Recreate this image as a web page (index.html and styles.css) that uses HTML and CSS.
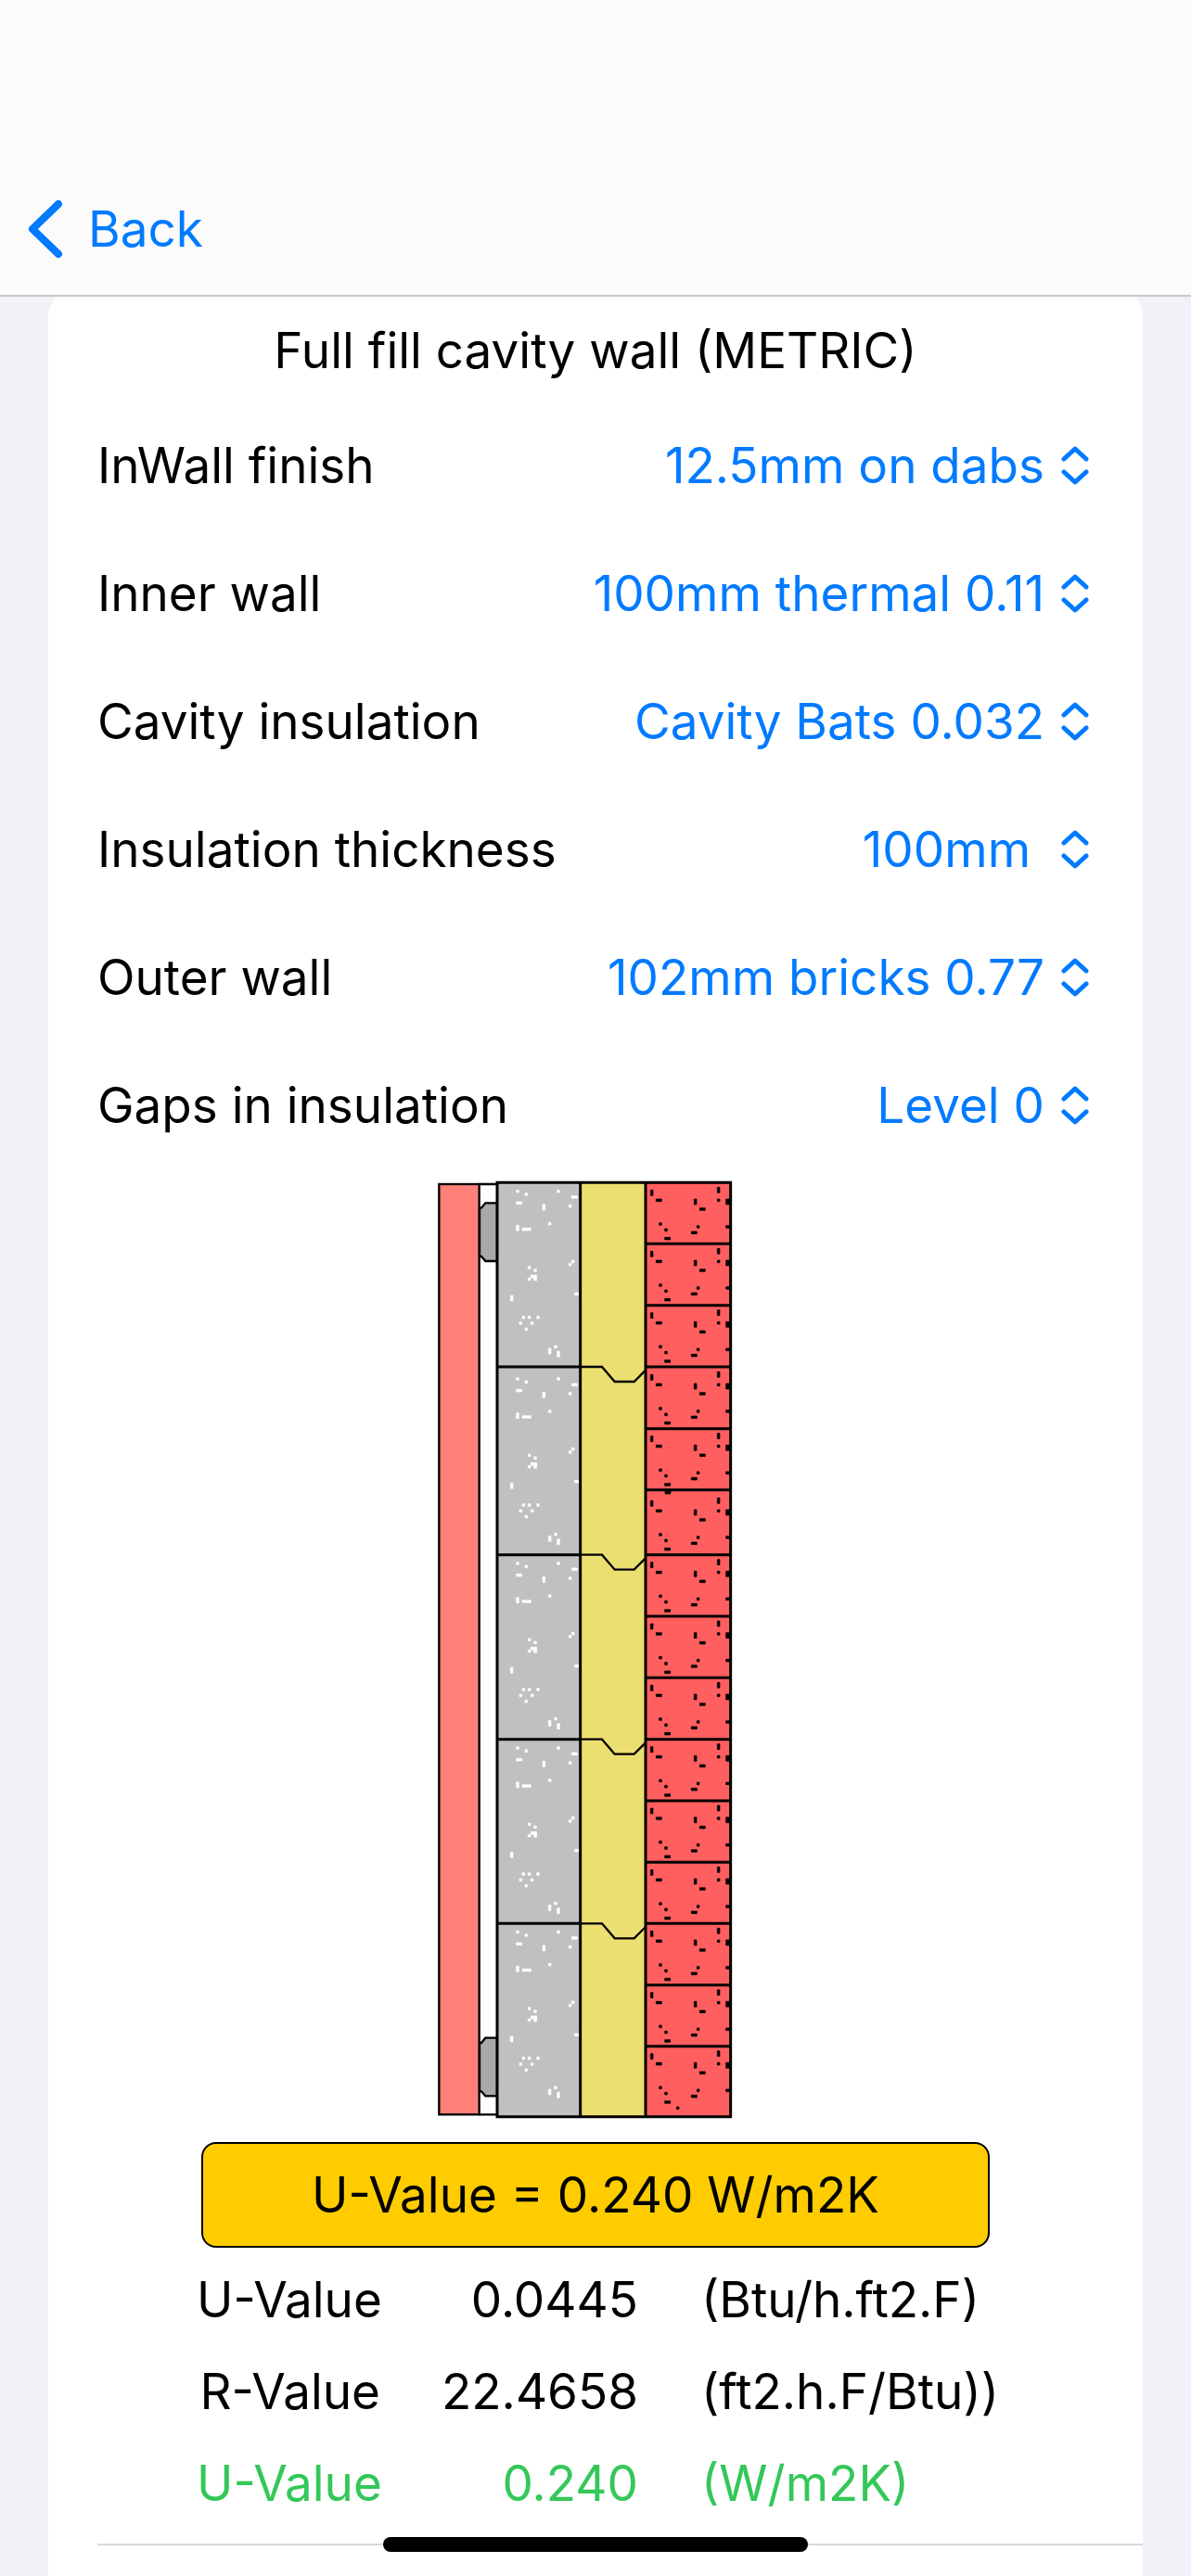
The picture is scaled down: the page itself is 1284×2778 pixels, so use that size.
FILE: index.html
```
<!DOCTYPE html>
<html lang="en">
<head>
    <meta charset="UTF-8">
    <meta name="viewport" content="width=device-width, initial-scale=1.0">
    <title>Full fill cavity wall</title>
    <link rel="stylesheet" href="styles.css">
</head>
<body>
    <header class="navbar">
        <a class="back" href="#">
            <svg class="back-icon" viewBox="0 0 38 64" aria-hidden="true">
                <path d="M33 5 L5 32 L33 59"/>
            </svg>
            Back
        </a>
    </header>

    <!-- shared shapes -->
    <svg class="defs" aria-hidden="true">
        <symbol id="updown" viewBox="0 0 30 42">
            <path d="M3 14 L15 3 L27 14 M3 28 L15 39 L27 28"/>
        </symbol>
    </svg>

    <main class="card">
        <h1 class="title">Full fill cavity wall (METRIC)</h1>

        <form class="options">
            <div class="row">
                <label for="finish">InWall finish</label>
                <select id="finish"><option>12.5mm on dabs</option></select>
                <svg class="updown"><use href="#updown"/></svg>
            </div>
            <div class="row">
                <label for="inner">Inner wall</label>
                <select id="inner"><option>100mm thermal 0.11</option></select>
                <svg class="updown"><use href="#updown"/></svg>
            </div>
            <div class="row">
                <label for="insulation">Cavity insulation</label>
                <select id="insulation"><option>Cavity Bats 0.032</option></select>
                <svg class="updown"><use href="#updown"/></svg>
            </div>
            <div class="row">
                <label for="thickness">Insulation thickness</label>
                <select id="thickness"><option>100mm&nbsp;</option></select>
                <svg class="updown"><use href="#updown"/></svg>
            </div>
            <div class="row">
                <label for="outer">Outer wall</label>
                <select id="outer"><option>102mm bricks 0.77</option></select>
                <svg class="updown"><use href="#updown"/></svg>
            </div>
            <div class="row">
                <label for="gaps">Gaps in insulation</label>
                <select id="gaps"><option>Level 0</option></select>
                <svg class="updown"><use href="#updown"/></svg>
            </div>
        </form>

        <svg class="wall" viewBox="0 0 960 3039" role="img" aria-label="Wall section">
            <defs>
                <g id="block">
                    <path class="speck-light" d="M254 24h8v8h-8z M282 34h8v8h-8z M386 24h8v8h-8z M433 43h18v8h-18z M254 62h18v8h-18z M339 71h8v18h-8z M424 72h8v8h-8z M358 129h8v8h-8z M254 138h8v18h-8z M273 147h28v8h-28z M433 251h8v8h-8z M424 261h8v8h-8z M292 271h8v8h-8z M311 280h8v8h-8z M301 299h19v18h-9v-9h-10z M292 308h8v8h-8z M235 365h8v18h-8z M443 356h14v8h-14z M273 432h8v8h-8z M292 432h8v8h-8z M320 432h8v8h-8z M264 451h8v8h-8z M301 451h8v8h-8z M282 470h8v8h-8z M377 527h8v8h-8z M358 536h8v18h-8z M386 546h8v18h-8z"/>
                </g>
                <g id="brick">
                    <path class="speck-dark" d="M688 24h8v18h-8z M706 53h18v8h-18z M829 53h8v18h-8z M847 82h18v8h-18z M904 15h8v18h-8z M904 53h8v8h-8z M932 53h14v18h-14z M716 130h8v8h-8z M734 149h8v8h-8z M734 177h18v8h-18z M820 158h18v8h-18z M838 139h8v8h-8z M932 139h14v8h-14z"/>
                </g>
                <g id="dab">
                    <path class="dab" d="M135 89 H141 L154 73 H192 V261 H154 L141 246 H135 Z"/>
                </g>
                <path id="tie" class="tie" d="M461 0 H531 L572 48 H635 L672 11"/>
            </defs>

            <!-- plasterboard on dabs -->
            <rect class="board" x="4" y="12" width="130" height="3010"/>
            <path class="thin" d="M134 12 H192 M134 3022 H192"/>
            <use href="#dab"/>
            <use href="#dab" y="2701"/>

            <!-- block, insulation, brick -->
            <rect class="block-fill" x="192" y="7" width="269" height="3022"/>
            <rect class="bats-fill" x="461" y="7" width="211" height="3022"/>
            <rect class="brick-fill" x="672" y="7" width="275" height="3022"/>

            <use href="#block" y="7"/>
            <use href="#block" y="614"/>
            <use href="#block" y="1211"/>
            <use href="#block" y="1808"/>
            <use href="#block" y="2404"/>

            <use href="#brick" y="7"/>
            <use href="#brick" y="205"/>
            <use href="#brick" y="404"/>
            <use href="#brick" y="604"/>
            <use href="#brick" y="803"/>
            <use href="#brick" y="1012"/>
            <use href="#brick" y="1211"/>
            <use href="#brick" y="1410"/>
            <use href="#brick" y="1609"/>
            <use href="#brick" y="1808"/>
            <use href="#brick" y="2007"/>
            <use href="#brick" y="2206"/>
            <use href="#brick" y="2404"/>
            <use href="#brick" y="2603"/>
            <use href="#brick" y="2801"/>
            <path class="speck-dark" d="M735 1002h18v12h-18z M772 2997h8v8h-8z"/>

            <path class="joint" d="M192 603 H461 M192 1211 H461 M192 1808 H461 M192 2404 H461"/>
            <path class="joint" d="M672 205 H947 M672 404 H947 M672 603 H947 M672 803 H947 M672 1001 H947 M672 1211 H947 M672 1410 H947 M672 1609 H947 M672 1808 H947 M672 2007 H947 M672 2206 H947 M672 2404 H947 M672 2603 H947 M672 2801 H947"/>
            <use href="#tie" y="603"/>
            <use href="#tie" y="1211"/>
            <use href="#tie" y="1808"/>
            <use href="#tie" y="2404"/>
            <path class="joint" d="M192 7 H947 V3029 H192 Z M461 7 V3029 M672 7 V3029"/>
        </svg>

        <button class="result" type="button">U-Value = 0.240 W/m2K</button>

        <table class="values">
            <tr>
                <th scope="row">U-Value</th>
                <td class="number">0.0445</td>
                <td>(Btu/h.ft2.F)</td>
            </tr>
            <tr>
                <th scope="row">R-Value</th>
                <td class="number">22.4658</td>
                <td>(ft2.h.F/Btu))</td>
            </tr>
            <tr class="metric">
                <th scope="row">U-Value</th>
                <td class="number">0.240</td>
                <td>(W/m2K)</td>
            </tr>
        </table>
        <hr class="divider">
    </main>

    <div class="home-bar"></div>
</body>
</html>
```

FILE: styles.css
```
* {
    box-sizing: border-box;
}
body {
    margin: 0;
    min-height: 100vh;
    display: flex;
    flex-direction: column;
    background-color: #f2f1f7;
    font-family: Inter, "Liberation Sans", sans-serif;
    font-size: 53px;
    line-height: 66px;
    color: #000;
}
.defs {
    position: absolute;
    width: 0;
    height: 0;
}

/* top bar */
.navbar {
    position: sticky;
    top: 0;
    z-index: 1;
    display: flex;
    padding: 214px 30px 38px;
    background-color: #fbfbfc;
    border-bottom: 2px solid #c8c8cb;
}
.back {
    display: flex;
    align-items: center;
    gap: 27px;
    color: #007aff;
    text-decoration: none;
}
.back-icon {
    width: 38px;
    height: 64px;
    fill: none;
    stroke: #007aff;
    stroke-width: 8;
    stroke-linecap: round;
    stroke-linejoin: round;
}

/* card */
.card {
    flex: 1;
    display: flex;
    flex-direction: column;
    margin: -9px 52px 0;
    padding-top: 34px;
    background-color: #fff;
    border-radius: 30px 30px 0 0;
}
.title {
    margin: 0 0 22px;
    font-size: 53px;
    font-weight: normal;
    text-align: center;
}
.row {
    display: flex;
    align-items: center;
    height: 138px;
    padding: 0 58px 0 53px;
}
.row label {
    flex: 1;
}
.row select {
    appearance: none;
    padding: 0;
    border: none;
    background: none;
    font: inherit;
    color: #007aff;
    text-align-last: right;
}
.updown {
    width: 30px;
    height: 42px;
    margin-left: 18px;
    fill: none;
    stroke: #007aff;
    stroke-width: 5;
    stroke-linecap: round;
    stroke-linejoin: round;
}

/* wall section drawing */
.wall {
    align-self: center;
    width: 320px;
    height: 1013px;
    margin: 12px 20px 24px 0;
}
.board,
.dab,
.thin {
    stroke: #000;
    stroke-width: 7;
}
.board {
    fill: #ff7f79;
}
.dab {
    fill: #a9a9a9;
}
.block-fill {
    fill: #c0c0c0;
}
.bats-fill {
    fill: #ecdf71;
}
.brick-fill {
    fill: #ff5f5f;
}
.speck-light {
    fill: #fff;
    stroke: #fff;
    stroke-width: 2;
}
.speck-dark {
    fill: #000;
    stroke: #000;
    stroke-width: 2;
}
.joint,
.tie {
    fill: none;
    stroke: #000;
    stroke-width: 9;
}
.tie {
    stroke-width: 7;
}

/* results */
.result {
    align-self: center;
    width: 850px;
    height: 114px;
    padding: 0;
    border: 2px solid #000;
    border-radius: 16px;
    background-color: #ffcc00;
    font: inherit;
    color: #000;
}
.values {
    align-self: center;
    width: 860px;
    margin-top: 6px;
    table-layout: fixed;
    border-collapse: collapse;
}
.values th,
.values td {
    height: 99px;
    padding: 0;
    font-weight: normal;
    text-align: left;
    white-space: nowrap;
}
.values th {
    width: 198px;
    text-align: right;
}
.values .number {
    width: 346px;
    padding-right: 68px;
    text-align: right;
}
.metric {
    color: #34c759;
}
.divider {
    width: calc(100% - 53px);
    height: 2px;
    margin: 16px 0 0 53px;
    border: none;
    background-color: #d8d8da;
}
.home-bar {
    position: fixed;
    bottom: 26px;
    left: 50%;
    width: 458px;
    height: 16px;
    margin-left: -229px;
    border-radius: 8px;
    background-color: #000;
}
```
